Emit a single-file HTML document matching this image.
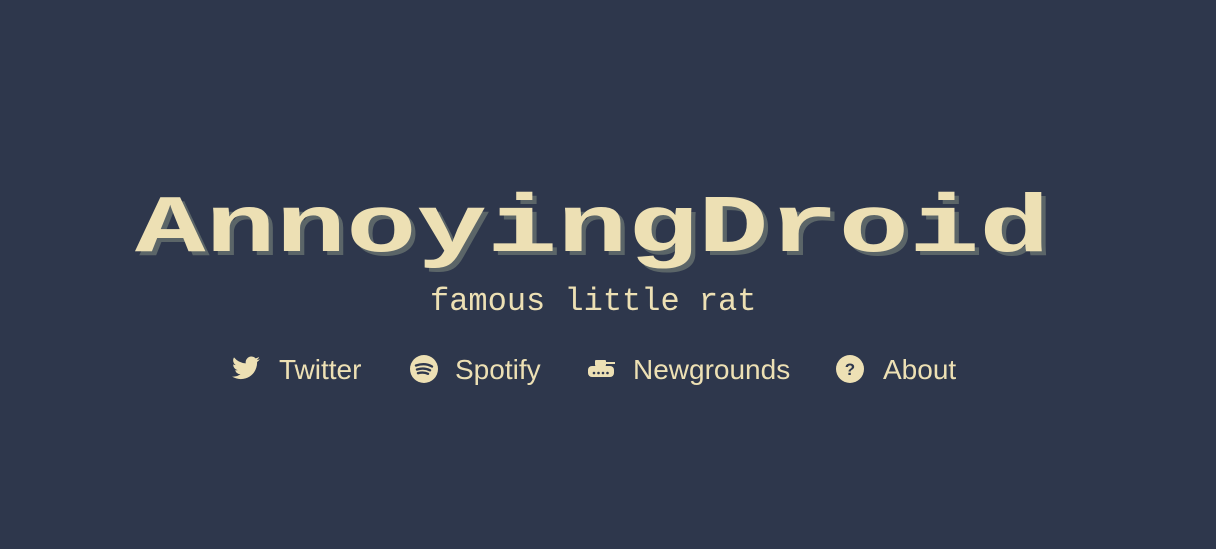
<!DOCTYPE html>
<html><head><meta charset="utf-8"><style>
html,body{margin:0;padding:0;width:1216px;height:549px;background:#2e374c;overflow:hidden}
.t{position:absolute;left:135px;top:189px;font-family:"Liberation Mono",monospace;font-weight:bold;font-size:82px;color:#ede0b4;text-shadow:3px 4px 0 #5b6568;line-height:1;white-space:nowrap;transform:scaleX(1.43);transform-origin:0 0}
.s{position:absolute;left:430px;top:286px;font-family:"Liberation Mono",monospace;font-size:32px;color:#ede0b4;line-height:1;white-space:nowrap}
.n{position:absolute;top:354px;font-family:"Liberation Sans",sans-serif;font-size:28px;color:#ede0b4;line-height:32px;white-space:nowrap}
svg{position:absolute}
</style></head><body>
<div class="t">AnnoyingDroid</div>
<div class="s">famous little rat</div>
<svg style="left:232px;top:356px" width="28" height="24" viewBox="0 0 24 20"><path fill="#ede0b4" d="M24 2.4a10 10 0 0 1-2.8.8A5 5 0 0 0 23.3.5a10 10 0 0 1-3.1 1.2A4.9 4.9 0 0 0 11.8 6 14 14 0 0 1 1.7.9a4.9 4.9 0 0 0 1.5 6.6A4.9 4.9 0 0 1 1 6.9 4.9 4.9 0 0 0 4.9 11.8a5 5 0 0 1-2.2.1 4.9 4.9 0 0 0 4.6 3.4A9.9 9.9 0 0 1 0 17.3 14 14 0 0 0 7.5 19.5c9.1 0 14-7.5 14-14v-.6A10 10 0 0 0 24 2.4z"/></svg>
<div class="n" style="left:279px">Twitter</div>
<svg style="left:410px;top:355px" width="28" height="28" viewBox="0 0 28 28"><circle cx="14" cy="14" r="14" fill="#ede0b4"/><path d="M6 10.5q9-3 16 1M7 14.5q7-2.2 13 .8M8 18.2q5.5-1.6 10 .6" stroke="#2e374c" stroke-width="2.4" fill="none" stroke-linecap="round"/></svg>
<div class="n" style="left:455px">Spotify</div>
<svg style="left:587px;top:358px" width="28" height="20" viewBox="0 0 28 20"><rect x="8" y="2" width="11" height="6" rx="1" fill="#ede0b4"/><rect x="18" y="4" width="10" height="2" fill="#ede0b4"/><rect x="1" y="8" width="26" height="11" rx="4" fill="#ede0b4"/><g fill="#2e374c"><circle cx="7" cy="15" r="1.3"/><circle cx="11.5" cy="15" r="1.3"/><circle cx="16" cy="15" r="1.3"/><circle cx="20.5" cy="15" r="1.3"/></g></svg>
<div class="n" style="left:633px">Newgrounds</div>
<svg style="left:836px;top:355px" width="28" height="28" viewBox="0 0 28 28"><circle cx="14" cy="14" r="14" fill="#ede0b4"/><text x="14" y="20" text-anchor="middle" font-family="Liberation Sans" font-weight="bold" font-size="17" fill="#2e374c">?</text></svg>
<div class="n" style="left:883px">About</div>
</body></html>
